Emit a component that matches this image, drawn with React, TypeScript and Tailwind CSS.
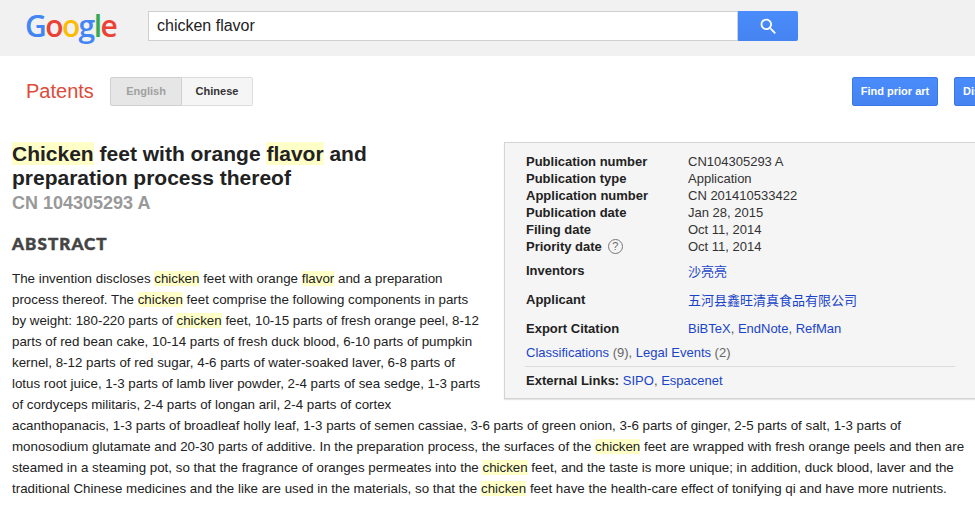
const font = "font-['Liberation_Sans',Arial,sans-serif]";
const cjk = "font-['Liberation_Sans','Noto_Sans_CJK_SC',sans-serif]";

function Hl({ children }: { children: string }) {
  return <span className="bg-[#ffffc8]">{children}</span>;
}

function Link({ children }: { children: string }) {
  return <a className="text-[#1a44c8]">{children}</a>;
}

const rows = [
  ["Publication number", "CN104305293 A"],
  ["Publication type", "Application"],
  ["Application number", "CN 201410533422"],
  ["Publication date", "Jan 28, 2015"],
  ["Filing date", "Oct 11, 2014"],
];

function Label({ children }: { children: React.ReactNode }) {
  return <div className="w-[162px] shrink-0 font-bold text-[#222]">{children}</div>;
}

function InfoBox() {
  return (
    <div className="float-right w-[500px] mr-[-24px] ml-[22px] mb-[6px] h-[257px] border border-[#d4d4d4] shadow-[0_1px_1px_rgba(0,0,0,0.1)] bg-[#f5f5f5] pl-[21px] pt-[10px] text-[13px] leading-[17px] text-[#333]">
      {rows.map(([k, v]) => (
        <div key={k} className="flex">
          <Label>{k}</Label>
          <div>{v}</div>
        </div>
      ))}
      <div className="flex">
        <Label>
          <span className="flex items-center gap-[6px]">
            Priority date
            <span className="w-[15px] h-[15px] rounded-full border border-[#777] text-[#666] font-normal text-[11px] leading-[13px] text-center">?</span>
          </span>
        </Label>
        <div>Oct 11, 2014</div>
      </div>
      <div className={`flex mt-[7px] h-[29px] ${cjk}`}>
        <Label>Inventors</Label>
        <div className="pt-[1px]"><Link>沙亮亮</Link></div>
      </div>
      <div className={`flex h-[29px] ${cjk}`}>
        <Label>Applicant</Label>
        <div className="pt-[1px]"><Link>五河县鑫旺清真食品有限公司</Link></div>
      </div>
      <div className="flex h-[24px]">
        <Label>Export Citation</Label>
        <div className="text-[#555]"><Link>BiBTeX</Link>, <Link>EndNote</Link>, <Link>RefMan</Link></div>
      </div>
      <div className="text-[#666]">
        <Link>Classifications</Link> (9), <Link>Legal Events</Link> (2)
      </div>
      <div className="mt-[5px] w-[430px] border-t border-[#dcdcdc] -ml-[1px] pt-[5px] pl-[1px] text-[#555]">
        <span className="font-bold text-[#222]">External Links:</span> <Link>SIPO</Link>, <Link>Espacenet</Link>
      </div>
    </div>
  );
}

export default function App() {
  return (
    <div className={`w-[975px] h-[514px] overflow-hidden bg-white ${font}`}>
      <div className="h-[56px] bg-[#f1f1f1] flex items-start pt-[11px]">
        <div className="w-[148px] pl-[25px] shrink-0 font-['Open_Sans',sans-serif] font-semibold text-[30px] leading-[30px] tracking-[-1.6px]">
          <span className="text-[#4285f4]">G</span>
          <span className="text-[#ea4335]">o</span>
          <span className="text-[#fbbc05]">o</span>
          <span className="text-[#4285f4]">g</span>
          <span className="text-[#34a853]">l</span>
          <span className="text-[#ea4335]">e</span>
        </div>
        <div className="w-[590px] h-[30px] bg-white border border-[#d0d0d0] pl-[8px] text-[16px] leading-[26px] text-[#222] flex items-center">
          chicken flavor
        </div>
        <div className="w-[60px] h-[30px] bg-linear-to-b from-[#4a8cfc] to-[#4583f0] rounded-r-[2px] flex items-center justify-center">
          <svg width="21" height="21" viewBox="0 0 24 24" fill="white">
            <path d="M15.5 14h-.79l-.28-.27C15.41 12.59 16 11.11 16 9.5 16 5.91 13.09 3 9.5 3S3 5.91 3 9.5 5.91 16 9.5 16c1.61 0 3.09-.59 4.23-1.57l.27.28v.79l5 4.99L20.49 19l-4.99-5zm-6 0C7.01 14 5 11.99 5 9.5S7.01 5 9.5 5 14 7.01 14 9.5 11.99 14 9.5 14z" />
          </svg>
        </div>
      </div>

      <div className="h-[60px] flex items-start pt-[21px] w-[1100px]">
        <div className="w-[110px] pl-[26px] text-[20px] leading-[28px] text-[#dd4b39] shrink-0">Patents</div>
        <div className="flex h-[29px] text-[11px] font-bold">
          <div className="w-[72px] flex items-center justify-center border border-[#d0d0d0] bg-[#e6e6e6] rounded-l-[2px] text-[#a0a0a0]">English</div>
          <div className="w-[71px] flex items-center justify-center border border-l-0 border-[#dcdcdc] bg-[#f5f5f5] rounded-r-[2px] text-[#333]">Chinese</div>
        </div>
        <div className="ml-[599px] w-[86px] h-[29px] bg-linear-to-b from-[#4a8cfc] to-[#4583f0] border border-[#3b78e7] rounded-[2px] text-white text-[11px] font-bold flex items-center justify-center">Find prior art</div>
        <div className="ml-[16px] w-[86px] h-[29px] bg-linear-to-b from-[#4a8cfc] to-[#4583f0] border border-[#3b78e7] rounded-[2px] text-white text-[11px] font-bold pl-[8px] flex items-center">Discuss this</div>
      </div>

      <div className="px-[12px] pt-[26px] w-[992px] text-[#222]">
        <InfoBox />
        <h1 className="text-[21px] leading-[24px] font-bold text-[#222]">
          <Hl>Chicken</Hl> feet with orange <Hl>flavor</Hl> and<br />preparation process thereof
        </h1>
        <div className="text-[18px] leading-[22px] font-bold text-[#999] mt-[2px]">CN 104305293 A</div>
        <div className="font-['Lato',sans-serif] font-black text-[17px] leading-[20px] tracking-[1.1px] [-webkit-text-stroke:0.5px_#444] text-[#444] mt-[20px]">ABSTRACT</div>
        <p className="text-[13.33px] leading-[21px] text-[#222] mt-[14px] w-[960px]">
          The invention discloses <Hl>chicken</Hl> feet with orange <Hl>flavor</Hl> and a preparation process thereof. The <Hl>chicken</Hl> feet comprise the following components in parts by weight: 180-220 parts of <Hl>chicken</Hl> feet, 10-15 parts of fresh orange peel, 8-12 parts of red bean cake, 10-14 parts of fresh duck blood, 6-10 parts of pumpkin kernel, 8-12 parts of red sugar, 4-6 parts of water-soaked laver, 6-8 parts of lotus root juice, 1-3 parts of lamb liver powder, 2-4 parts of sea sedge, 1-3 parts of cordyceps militaris, 2-4 parts of longan aril, 2-4 parts of cortex acanthopanacis, 1-3 parts of broadleaf holly leaf, 1-3 parts of semen cassiae, 3-6 parts of green onion, 3-6 parts of ginger, 2-5 parts of salt, 1-3 parts of monosodium glutamate and 20-30 parts of additive. In the preparation process, the surfaces of the <Hl>chicken</Hl> feet are wrapped with fresh orange peels and then are steamed in a steaming pot, so that the fragrance of oranges permeates into the <Hl>chicken</Hl> feet, and the taste is more unique; in addition, duck blood, laver and the traditional Chinese medicines and the like are used in the materials, so that the <Hl>chicken</Hl> feet have the health-care effect of tonifying qi and have more nutrients.
        </p>
      </div>
    </div>
  );
}
